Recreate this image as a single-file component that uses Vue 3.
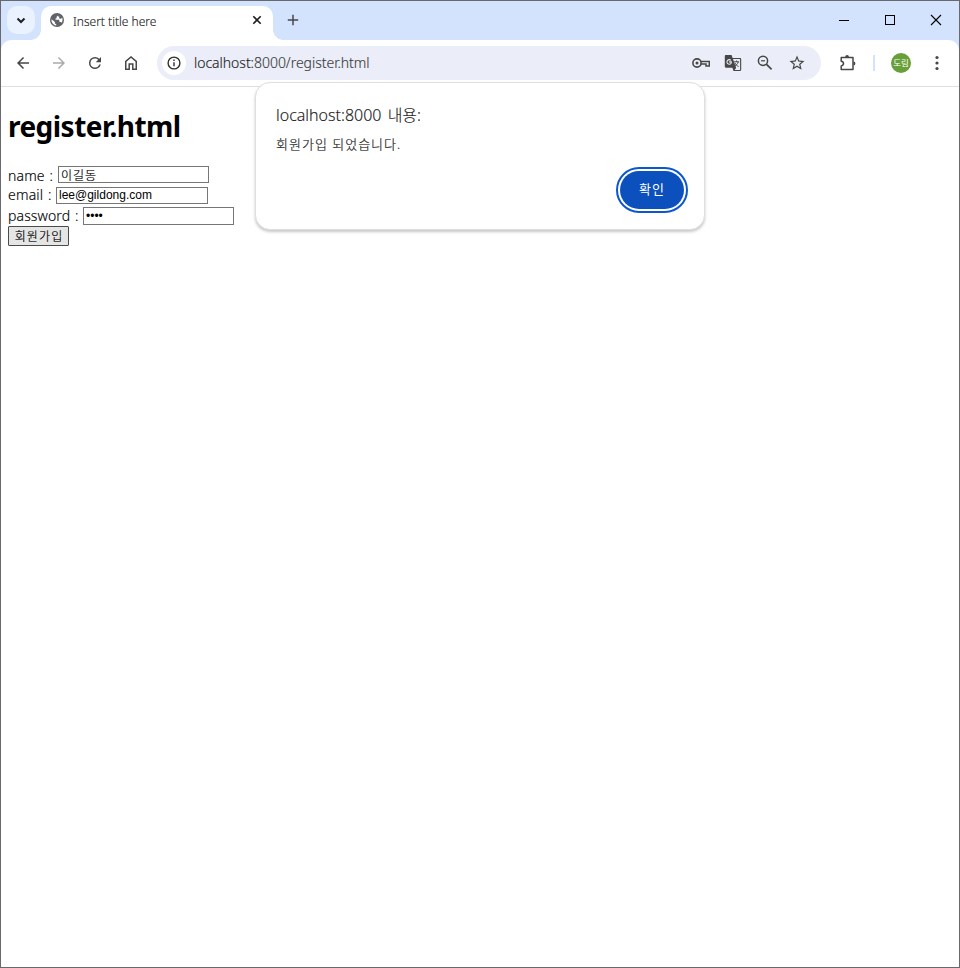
<script setup>
import { ref } from 'vue'

const name = ref('이길동')
const email = ref('lee@gildong.com')
const password = ref('1234')
</script>

<template>
  <div class="window">
    <header class="tabstrip">
      <button class="tab-search" aria-label="tabs">
        <svg width="28" height="28" viewBox="0 0 28 28"><path d="M10.500 12.500L14 16l3.500-3.500" fill="none" stroke="#1f1f1f" stroke-width="2" /></svg>
      </button>
      <div class="tab">
        <svg class="globe" width="14" height="14" viewBox="0 0 14 14">
          <circle cx="7" cy="7" r="7" fill="#5f6368" />
          <path d="M8 1.600c.4 1-.2 1.900-1.400 2.100v1.200c0 .5-.5.7-1.100.7v1.200h2.800c.8 0 1.100.5 1.100 1.200v1h1c.6 0 1 .3 1.200.8 1.100-1.500 1.300-3.600.4-5.300-.2.8-.8 1.300-1.700 1.300-.8 0-1.100-.4-1.100-1.100V3.500H8zM1.500 6.200c-.3 3 1.600 5.700 4.700 6.200v-1.300c-.8 0-1.300-.5-1.300-1.300v-.7z" fill="#fff" />
        </svg>
        <span class="tab-title">Insert title here</span>
        <svg class="tab-close" width="10" height="10" viewBox="0 0 10 10"><path d="M1.300 1.300l7.400 7.400M8.700 1.300L1.300 8.700" stroke="#1f1f1f" stroke-width="1.600" /></svg>
      </div>
      <svg class="new-tab" width="12" height="12" viewBox="0 0 12 12"><path d="M6 .8v10.400M.8 6h10.400" stroke="#474747" stroke-width="1.500" /></svg>
      <div class="controls">
        <svg width="46" height="38" viewBox="0 0 46 38"><path d="M18 19.500h10" stroke="#000" /></svg>
        <svg width="46" height="38" viewBox="0 0 46 38"><rect x="18.500" y="14.500" width="9" height="9" fill="none" stroke="#000" /></svg>
        <svg width="46" height="38" viewBox="0 0 46 38"><path d="M18 14l10 10M28 14L18 24" stroke="#000" stroke-width="1.100" /></svg>
      </div>
    </header>

    <nav class="toolbar">
      <div class="nav-icons">
        <svg width="18" height="18" viewBox="0 0 24 24" fill="#474747"><path d="M20 11H7.830l5.590-5.590L12 4l-8 8 8 8 1.410-1.410L7.830 13H20z" /></svg>
        <svg width="18" height="18" viewBox="0 0 24 24" fill="#ababab"><path d="M4 11h12.170l-5.590-5.590L12 4l8 8-8 8-1.410-1.410L16.170 13H4z" /></svg>
        <svg width="18" height="18" viewBox="0 0 24 24" fill="#474747"><path d="M17.650 6.350A7.960 7.960 0 0 0 12 4a8 8 0 1 0 7.730 10h-2.080A6 6 0 1 1 12 6c1.660 0 3.140.69 4.220 1.780L13 11h7V4z" /></svg>
        <svg width="18" height="18" viewBox="0 0 18 18" fill="none" stroke="#474747" stroke-width="1.500"><path d="M3.750 15.250V7.300L9 3l5.250 4.300v7.950H10.800V10H7.200v5.250z" /></svg>
      </div>
      <div class="omnibox">
        <span class="site-info">
          <svg width="14" height="14" viewBox="0 0 14 14"><circle cx="7" cy="7" r="5.900" fill="none" stroke="#303030" stroke-width="1.400" /><path d="M7 6.200v4M7 3.600v1.400" stroke="#303030" stroke-width="1.400" /></svg>
        </span>
        <span class="url"><span class="host">localhost:</span>8000/register.html</span>
        <div class="page-icons">
          <svg width="18" height="18" viewBox="0 0 18 18" fill="none" stroke="#474747"><circle cx="5" cy="9" r="4.100" stroke-width="1.600" /><circle cx="5" cy="9" r="1.500" fill="#474747" stroke="none" /><path d="M8.800 7.600h8.500v4.400h-3.300v-1.900H8.900" stroke-width="1.500" /></svg>
          <svg width="18" height="18" viewBox="0 0 18 18">
            <path d="M2 1h5.600l1 3H16c.7 0 1.200.5 1.200 1.200v10.600c0 .7-.5 1.200-1.200 1.200H9.500l-1.100-3.200H2c-.7 0-1.200-.5-1.200-1.200V2.200C.8 1.500 1.300 1 2 1z" fill="#474747" />
            <path d="M9 5.100h6.600c.3 0 .5.200.5.500v9.800c0 .3-.2.500-.5.500h-5.100l1.700-2z" fill="#ebeef8" />
            <path d="M6.900 6.300A2.300 2.300 0 1 0 7 9.400c.3-.4.400-.9.300-1.500H5" fill="none" stroke="#ebeef8" stroke-width="1.100" />
            <path d="M9.800 7.800h5.400M12.500 6.500v1.300M14.200 8c-.5 1.900-1.700 3.200-3.400 4.200M11 9c.7 1.600 1.900 2.700 3.600 3.500" fill="none" stroke="#474747" />
          </svg>
          <svg width="18" height="18" viewBox="0 0 18 18" fill="none" stroke="#474747" stroke-width="1.500"><circle cx="7" cy="6.800" r="4.600" /><path d="M10.300 10.100l5.300 5.300" stroke-width="1.700" /><path d="M5 6.800h4" stroke-width="1.200" /></svg>
          <svg width="18" height="18" viewBox="0 0 24 24" fill="#474747"><path d="M22 9.240l-7.190-.62L12 2 9.190 8.630 2 9.240l5.460 4.730L5.820 21 12 17.270 18.180 21l-1.630-7.030zM12 15.400l-3.760 2.270 1-4.280-3.320-2.880 4.380-.38L12 6.100l1.710 4.040 4.380.38-3.320 2.880 1 4.280z" /></svg>
        </div>
      </div>
      <svg class="extensions" width="18" height="18" viewBox="0 0 18 18"><path d="M2.200 3.500h11.800v12H2.200v-3.600c1.500-.2 2.300-1 2.300-2.300s-.8-2.100-2.300-2.300z" fill="none" stroke="#474747" stroke-width="1.500" stroke-linejoin="round" /><path d="M6.200 3a1.900 1.900 0 0 1 3.800 0zM14.500 7.600a1.900 1.900 0 0 1 0 3.800z" fill="#474747" /></svg>
      <i class="divider"></i>
      <span class="avatar">도림</span>
      <svg class="menu" width="6" height="18" viewBox="0 0 6 18" fill="#474747"><circle cx="3" cy="3.500" r="1.600" /><circle cx="3" cy="9" r="1.600" /><circle cx="3" cy="14.500" r="1.600" /></svg>
    </nav>

    <main class="page">
      <h1>register.html</h1>
      <form @submit.prevent>
        <div class="row"><label class="l-name" for="name">name :</label><input id="name" v-model="name" type="text"></div>
        <div class="row"><label class="l-email" for="email">email :</label><input id="email" v-model="email" type="text"></div>
        <div class="row last"><label class="l-pass" for="password">password :</label><input id="password" v-model="password" type="password"></div>
        <button class="submit">회원가입</button>
      </form>
    </main>

    <section class="dialog" role="alertdialog">
      <h2><span class="origin">localhost:8000</span> 내용:</h2>
      <p>회원가입 되었습니다.</p>
      <button class="confirm">확인</button>
    </section>
  </div>
</template>

<style>
body { margin: 0; background: #fff; }
</style>

<style scoped>
* { box-sizing: border-box; }
svg { display: block; flex: none; }
button { padding: 0; border: 0; font-family: inherit; }
.window {
  position: relative;
  display: flex;
  flex-direction: column;
  width: 960px;
  height: 968px;
  border: 1px solid #68686d;
  overflow: hidden;
  background: #d3e2fd;
  font-family: "Noto Sans", "Noto Sans CJK KR", sans-serif;
  color: #1f1f1f;
}
.tabstrip { display: flex; height: 39px; flex: none; }
.tab-search { width: 28px; height: 28px; margin: 5px 0 0 6px; border-radius: 10px; background: #ebf2ff; }
.tab {
  position: relative;
  display: flex;
  align-items: center;
  width: 232px;
  height: 34px;
  margin: 5px 0 0 6px;
  padding: 0 11px 6px 9px;
  border-radius: 10px 10px 0 0;
  background: #fff;
}
.tab::before, .tab::after { content: ""; position: absolute; bottom: 0; width: 10px; height: 10px; }
.tab::before { left: -10px; background: radial-gradient(circle at 0 0, transparent 9.5px, #fff 10px); }
.tab::after { right: -10px; background: radial-gradient(circle at 100% 0, transparent 9.5px, #fff 10px); }
.tab-title { margin: 3px 0 0 9px; font-size: 12px; line-height: 16px; font-weight: 300; white-space: nowrap; -webkit-text-stroke: .15px; }
.tab-close { margin-left: auto; }
.new-tab { margin: 13px 0 0 14px; }
.controls { display: flex; margin-left: auto; }
.toolbar {
  display: flex;
  align-items: center;
  flex: none;
  height: 47px;
  padding: 0 19px 0 13px;
  border-bottom: 1px solid #dedfe1;
  border-radius: 10px 10px 0 0;
  background: #fff;
}
.nav-icons { display: flex; gap: 18px; }
.omnibox { display: flex; align-items: center; width: 664px; height: 34px; margin-left: 17px; padding: 0 15px 0 5px; border-radius: 17px; background: #ebeef8; }
.site-info { display: grid; place-items: center; width: 24px; height: 24px; border-radius: 50%; background: #fff; }
.url { margin-left: 8px; font-size: 14px; line-height: 20px; font-weight: 300; color: #3c3d40; letter-spacing: -.03px; white-space: nowrap; -webkit-text-stroke: .15px; }
.host { color: #1f1f1f; }
.page-icons { display: flex; gap: 14px; margin-left: auto; }
.extensions { margin-left: 18px; }
.divider { width: 2px; height: 16px; margin-left: 16px; background: #d3e2fd; }
.avatar { display: grid; place-items: center; width: 20px; height: 20px; margin-left: 16px; border-radius: 50%; background: #689f38; color: #fff; font-size: 8.5px; line-height: 20px; white-space: nowrap; }
.menu { margin-left: 23px; }
.page { flex: 1; padding: 19px 7px; background: #fff; color: #000; }
h1 { margin: 0; font-size: 28px; line-height: 40px; font-weight: 700; letter-spacing: -.53px; }
form { margin-top: 19px; }
.row { display: flex; align-items: flex-start; height: 21px; padding-top: 1px; font-size: 14px; }
.row.last { height: 19px; padding-top: 0; }
label { flex: none; line-height: 20px; white-space: nowrap; font-weight: 300; word-spacing: 1px; -webkit-text-stroke: .15px; }
.l-name { width: 50px; letter-spacing: .15px; }
.l-email { width: 48px; line-height: 15px; letter-spacing: .2px; }
.l-pass { width: 75px; line-height: 18px; letter-spacing: .12px; }
input { width: 151px; height: 17px; margin: 0; padding: 0 2px; border: 1px solid #767676; border-radius: 0; background: #fff; color: #000; font: 12px/14px "Liberation Sans", "Noto Sans CJK KR", sans-serif; outline: 0; }
#name { font-weight: 300; letter-spacing: .9px; -webkit-text-stroke: .2px; }
#email { width: 152px; padding-bottom: 2px; }
#password { height: 18px; }
.submit { display: block; width: 61px; height: 20px; padding-top: 1px; border: 1px solid #4b4b4b; border-radius: 1px; background: #e5e5e5; color: #000; font-size: 12px; line-height: 16px; font-weight: 300; letter-spacing: 1.1px; text-indent: 1px; -webkit-text-stroke: .2px; }
.dialog {
  position: absolute;
  left: 254px;
  top: 81px;
  display: flex;
  flex-direction: column;
  width: 450px;
  height: 148px;
  padding: 21px 20px 0;
  border: 1px solid #dfdfdf;
  border-radius: 15px;
  background: #fff;
  box-shadow: 0 2px 3px rgba(0, 0, 0, .22);
}
h2 { margin: 0; font-size: 16px; line-height: 22px; font-weight: 300; word-spacing: 2px; -webkit-text-stroke: .15px; }
.dialog p { margin: 9px 0 0; font-size: 13px; line-height: 18px; font-weight: 300; letter-spacing: 1px; -webkit-text-stroke: .2px; }
.confirm { align-self: flex-end; width: 64px; height: 38px; margin-top: 18px; padding-bottom: 3px; border-radius: 19px; background: #0b50bd; color: #fff; font-size: 13px; letter-spacing: 1px; outline: 2px solid #0b57d0; outline-offset: 2px; }
</style>
